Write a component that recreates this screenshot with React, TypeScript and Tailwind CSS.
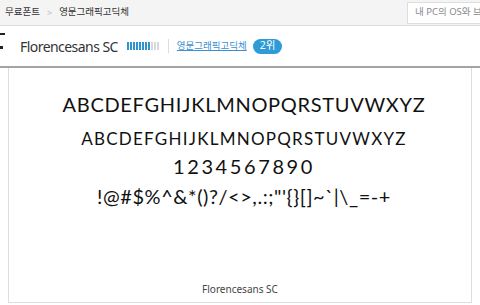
import React from "react";

const KR = { fontFamily: '"Noto Sans", "Noto Sans CJK KR", sans-serif' };
const PREVIEW = { fontFamily: 'Lato, "Liberation Sans", sans-serif' };

function RankBars({ filled, total }: { filled: number; total: number }) {
  return (
    <div className="flex h-[8px] items-stretch gap-[1px]">
      {Array.from({ length: total }).map((_, i) => (
        <div key={i} className={i < filled ? "w-[2px] bg-[#2f95cf]" : "w-[2px] bg-[#d9d9d9]"} />
      ))}
    </div>
  );
}

export default function App() {
  return (
    <div className="h-[305px] w-[480px] overflow-hidden bg-white" style={KR}>
      {/* breadcrumb bar */}
      <div className="flex h-[26px] items-center justify-between border-b border-[#dcdcdc] bg-[#f4f4f4] pl-[5px]">
        <div className="flex items-center text-[9.5px] text-[#333]">
          <span>무료폰트</span>
          <span className="mx-[7px] text-[9px] text-[#bbb]">&gt;</span>
          <span>영문그래픽고딕체</span>
        </div>
        <div className="-mr-[10px] flex h-[22px] w-[83px] items-center overflow-hidden border border-[#dedede] bg-white pl-[7px] text-[9.5px] whitespace-nowrap text-[#8a8a8a]">
          내 PC의 OS와 브라우저
        </div>
      </div>

      {/* font header */}
      <div className="flex h-[42px] items-center border-b-2 border-[#a3a3a3]">
        <div className="flex w-[20px] flex-col gap-[11px] self-start pt-[7px]">
          <div className="h-[2px] w-[5px] bg-[#222]" />
          <div className="h-[3px] w-[3px] bg-[#222]" />
        </div>
        <span className="text-[14px] tracking-[-0.55px] text-[#333]">Florencesans SC</span>
        <div className="ml-[9px]">
          <RankBars filled={8} total={11} />
        </div>
        <div className="ml-[9px] h-[14px] w-px bg-[#ddd]" />
        <a className="ml-[8px] text-[9.5px] text-[#3c8fd1] underline">영문그래픽고딕체</a>
        <span className="ml-[6px] flex h-[15px] items-center rounded-full bg-[#2e9ad6] px-[7px] text-[10.5px] text-white">
          2위
        </span>
      </div>

      {/* preview */}
      <div className="mx-[8px] flex h-[235px] flex-col items-center border-x border-b border-[#dddddd] pl-[8px] text-[#111]" style={PREVIEW}>
        <div className="mt-[22px] text-[20px] leading-[28px] tracking-[0.7px]">ABCDEFGHIJKLMNOPQRSTUVWXYZ</div>
        <div className="mt-[8px] text-[17px] leading-[26px] tracking-[1.25px]">ABCDEFGHIJKLMNOPQRSTUVWXYZ</div>
        <div className="mt-0 text-[20px] leading-[28px] tracking-[2.6px]">1234567890</div>
        <div className="mt-[2px] text-[20px] leading-[28px] tracking-[0.55px]">!@#$%^&amp;*()?/&lt;&gt;,.:;"'{"{}"}[]~`|\_=-+</div>
        <div className="mt-auto mb-[5px] -ml-[8px] text-[10px] text-[#444]" style={KR}>Florencesans SC</div>
      </div>
    </div>
  );
}
